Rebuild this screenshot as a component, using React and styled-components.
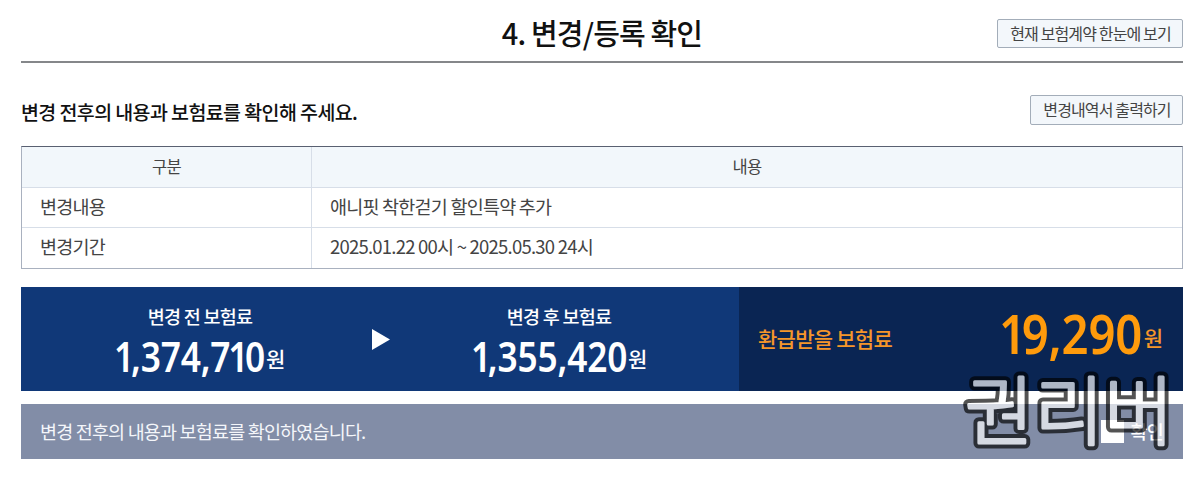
import React, { useState } from "react";
import styled, { createGlobalStyle } from "styled-components";

const changes = [
  { label: "변경내용", value: "애니핏 착한걷기 할인특약 추가" },
  { label: "변경기간", value: "2025.01.22 00시 ~ 2025.05.30 24시" },
];

// 숫자 1은 폭이 좁아서 따로 간격을 줄인다
const Amount = ({ value, large }) => (
  <AmountWrap $large={large}>
    <Figure $large={large}>
      {value
        .split("")
        .map((ch, i) => (ch === "1" ? <One key={i}>{ch}</One> : ch))}
    </Figure>
    <Won $large={large}>원</Won>
  </AmountWrap>
);

const App = () => {
  const [checked, setChecked] = useState(false);

  return (
    <Page>
      <GlobalStyle />
      <Header>
        <Title>4. 변경/등록 확인</Title>
        <HeaderBtn>현재 보험계약 한눈에 보기</HeaderBtn>
      </Header>

      <Guide>
        <GuideText>변경 전후의 내용과 보험료를 확인해 주세요.</GuideText>
        <PrintBtn>변경내역서 출력하기</PrintBtn>
      </Guide>

      <Table>
        <HeadCell>구분</HeadCell>
        <HeadCell>내용</HeadCell>
        {changes.map((item) => (
          <React.Fragment key={item.label}>
            <Cell>{item.label}</Cell>
            <Cell>{item.value}</Cell>
          </React.Fragment>
        ))}
      </Table>

      <PriceWrap>
        <Price>
          <PriceLabel>변경 전 보험료</PriceLabel>
          <Amount value="1,374,710" />
        </Price>
        <Arrow viewBox="0 0 18 21">
          <path d="M0 0L18 10.5L0 21Z" fill="#fff" />
        </Arrow>
        <Price>
          <PriceLabel>변경 후 보험료</PriceLabel>
          <Amount value="1,355,420" />
        </Price>
        <Refund>
          <RefundLabel>환급받을 보험료</RefundLabel>
          <Amount value="19,290" large />
        </Refund>
      </PriceWrap>

      <Confirm>
        <ConfirmText>변경 전후의 내용과 보험료를 확인하였습니다.</ConfirmText>
        <CheckLabel>
          <Check
            checked={checked}
            onChange={(e) => setChecked(e.target.checked)}
          />
          확인
        </CheckLabel>
        <Watermark viewBox="0 0 220 110">
          <g fill="#000" stroke="#000" strokeWidth="11">
            <text id="mark" x="5" y="82">
              권리버
            </text>
          </g>
          <use href="#mark" fill="#fff" stroke="#fff" strokeWidth="3" />
        </Watermark>
      </Confirm>
    </Page>
  );
};

const GlobalStyle = createGlobalStyle`
  * {
    box-sizing: border-box;
  }
  body {
    margin: 0;
    background: #fff;
    font-family: "Noto Sans CJK KR", sans-serif;
    color: #444;
  }
`;

const Page = styled.div`
  width: 1200px;
  height: 484px;
  padding: 0 17px 0 21px;
  overflow: hidden;
`;

const Header = styled.div`
  display: grid;
  grid-template-columns: 1fr auto 1fr;
  height: 63px;
  border-bottom: 2px solid #85878a;
`;

const Title = styled.h1`
  grid-column: 2;
  margin: 0;
  padding-top: 10px;
  font-size: 29px;
  line-height: 44px;
  font-weight: 500;
  letter-spacing: -0.85px;
  color: #111;
`;

const Button = styled.button`
  padding: 0 0 1px;
  background: #f3f7fb;
  border: 1px solid #a3adb9;
  border-radius: 2px;
  font-family: inherit;
  font-size: 16px;
  line-height: 24px;
  letter-spacing: -0.87px;
  color: #444;
  white-space: nowrap;
`;

const HeaderBtn = styled(Button)`
  justify-self: end;
  width: 186px;
  height: 29px;
  margin-top: 19px;
  padding-left: 1px;
`;

const PrintBtn = styled(Button)`
  width: 153px;
  height: 30px;
  padding: 0 0 2px 1px;
`;

const Guide = styled.div`
  display: flex;
  justify-content: space-between;
  padding-top: 32px;
  height: 83px;
`;

const GuideText = styled.p`
  margin: 0;
  font-size: 19.5px;
  line-height: 34px;
  font-weight: 500;
  letter-spacing: -0.6px;
  color: #111;
`;

const Table = styled.div`
  display: grid;
  grid-template-columns: 290px 1fr;
  grid-template-rows: 41px 40px 40px;
  height: 123px;
  border: 1px solid #a9b1bf;
  border-top-color: #596071;
`;

const HeadCell = styled.div`
  background: #f2f7fb;
  border-bottom: 1px solid #d7dee8;
  text-align: center;
  font-size: 16.5px;
  line-height: 39px;
  letter-spacing: -0.8px;
  &:first-child {
    border-right: 1px solid #d7dee8;
  }
`;

const Cell = styled.div`
  padding-left: 18px;
  font-size: 18.5px;
  line-height: 37px;
  letter-spacing: -0.77px;
  &:nth-child(odd) {
    border-right: 1px solid #d7dee8;
  }
  &:nth-child(-n + 4) {
    border-bottom: 1px solid #d7dee8;
  }
`;

const PriceWrap = styled.div`
  display: grid;
  grid-template-columns: 351px 18px 349px 1fr;
  align-items: center;
  height: 104px;
  margin-top: 18px;
  background: #103878;
  color: #fff;
`;

const Price = styled.div`
  display: flex;
  flex-direction: column;
  align-items: center;
  height: 104px;
  padding-top: 15px;
  &:first-child {
    padding-left: 7px;
  }
  &:nth-child(3) {
    padding-right: 11px;
  }
`;

const PriceLabel = styled.span`
  font-size: 18.5px;
  line-height: 28px;
  font-weight: 500;
  letter-spacing: -0.75px;
`;

const AmountWrap = styled.div`
  display: flex;
  align-items: baseline;
  line-height: ${(props) => (props.$large ? "60px" : "52px")};
`;

// 좁은 숫자체: 가로로 줄이고 줄어든 만큼 왼쪽 여백을 당긴다
const Figure = styled.span`
  display: block;
  margin-left: ${(props) => (props.$large ? "-20px" : "-23px")};
  font-family: "Noto Sans", sans-serif;
  font-size: ${(props) => (props.$large ? "55px" : "41px")};
  font-weight: 600;
  letter-spacing: -0.2px;
  color: ${(props) => (props.$large ? "#ff9b0c" : "#fff")};
  transform: scaleX(0.86);
  transform-origin: right;
`;

const One = styled.span`
  margin-right: -0.09em;
  margin-left: -0.06em;
`;

const Won = styled.span`
  position: relative;
  top: ${(props) => (props.$large ? "-8px" : "-5px")};
  margin-left: 1px;
  font-size: 21px;
  font-weight: 500;
`;

const Arrow = styled.svg`
  width: 18px;
  height: 21px;
`;

const Refund = styled.div`
  display: flex;
  align-items: center;
  justify-content: space-between;
  height: 104px;
  padding: 0 20px 0 19px;
  background: #0a2553;
  color: #f5962a;
`;

const RefundLabel = styled.span`
  padding-bottom: 2px;
  font-size: 21px;
  font-weight: 500;
  letter-spacing: -0.75px;
`;

const Confirm = styled.div`
  position: relative;
  display: flex;
  align-items: center;
  justify-content: space-between;
  height: 55px;
  margin-top: 13px;
  padding: 0 20px 1px 19px;
  background: #828da7;
  color: #f4f6fa;
`;

const ConfirmText = styled.span`
  padding-bottom: 1px;
  font-size: 18.5px;
  letter-spacing: -0.82px;
`;

const CheckLabel = styled.label`
  display: flex;
  align-items: center;
  gap: 7px;
  font-size: 18.5px;
  font-weight: 500;
  letter-spacing: -0.8px;
  color: #fff;
`;

const Check = styled.input.attrs({ type: "checkbox" })`
  appearance: none;
  width: 23px;
  height: 23px;
  margin: 0;
  background: #fff;
`;

// 두 영역 위에 겹쳐지는 워터마크
const Watermark = styled.svg`
  position: absolute;
  right: 3px;
  top: -47px;
  width: 220px;
  height: 110px;
  font-size: 75px;
  font-weight: 300;
  letter-spacing: 0.8px;
  stroke-linejoin: round;
  opacity: 0.67;
  overflow: visible;
  pointer-events: none;
`;

export default App;
